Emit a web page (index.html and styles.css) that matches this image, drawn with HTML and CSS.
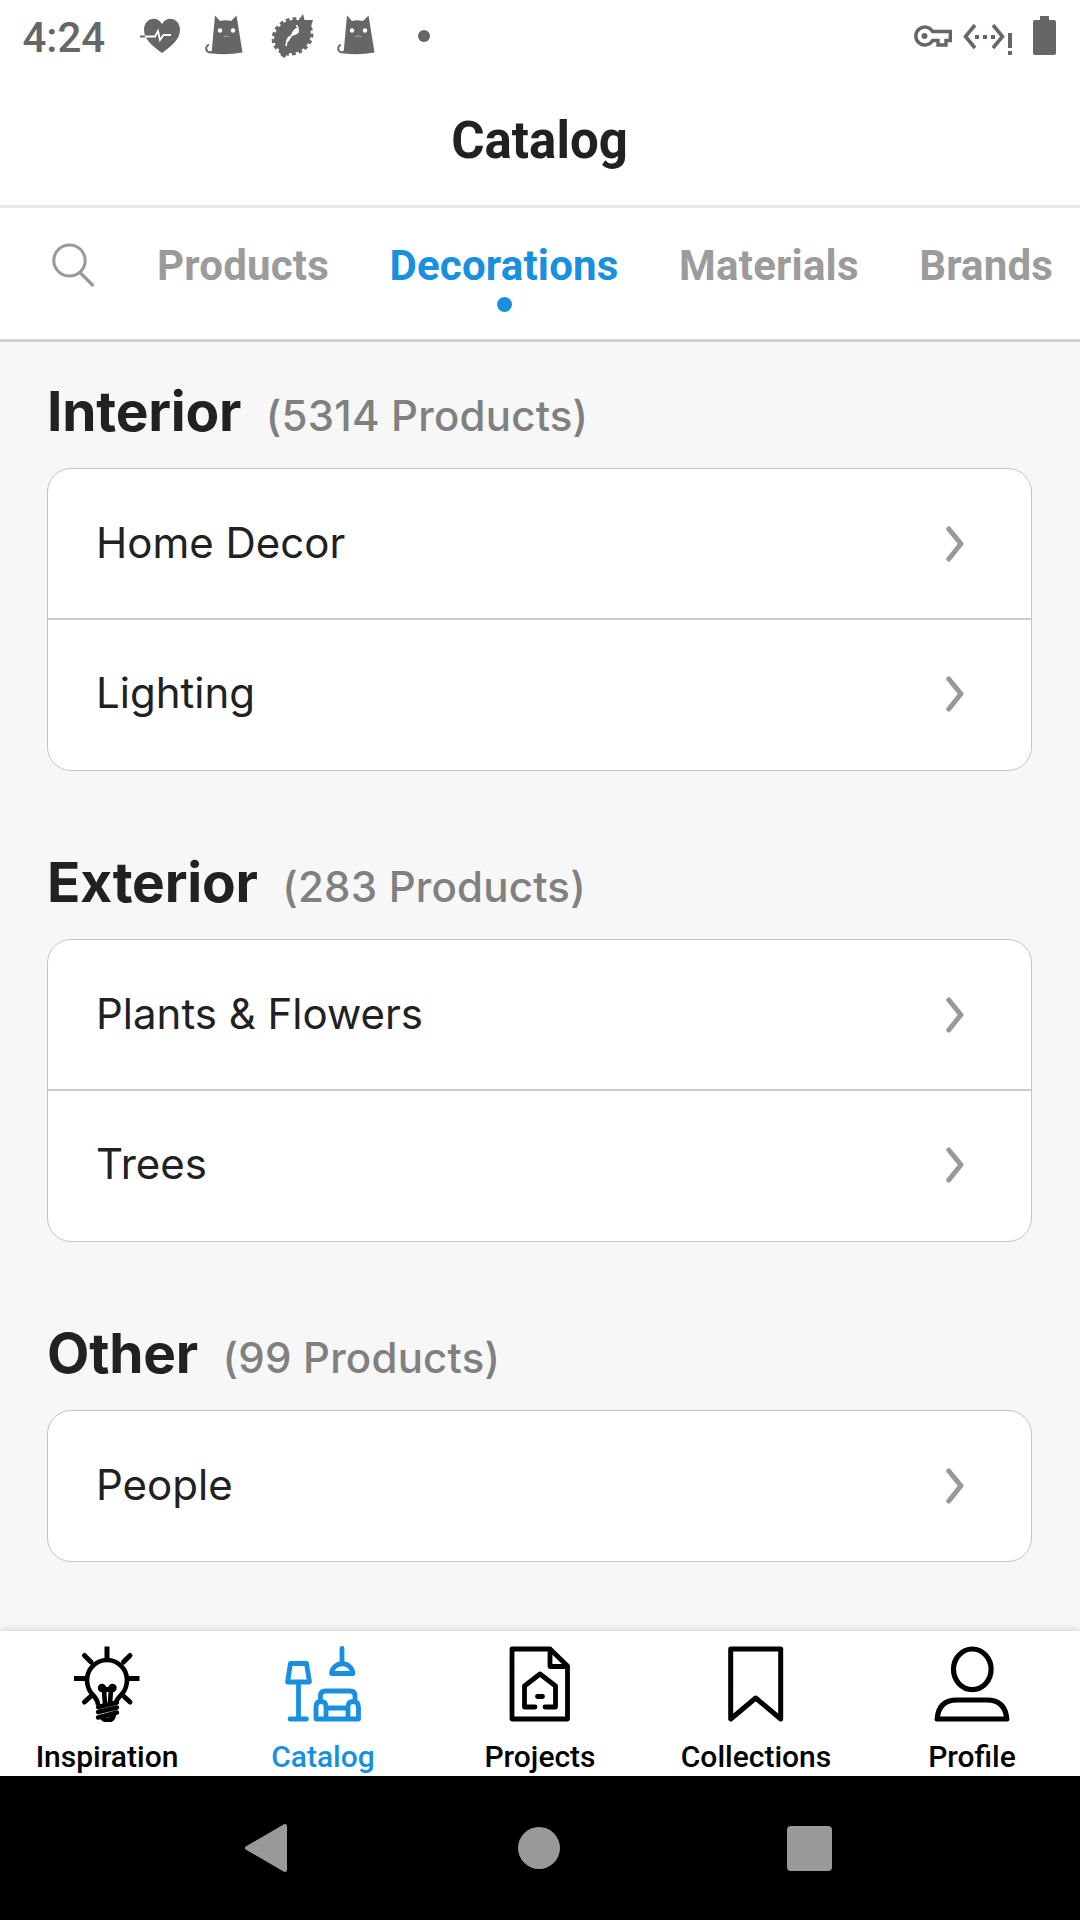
FILE: index.html
```html
<!DOCTYPE html>
<html lang="en">
<head>
<meta charset="utf-8">
<title>Catalog</title>
<link rel="stylesheet" href="styles.css">
</head>
<body>
<svg class="defs" width="0" height="0" aria-hidden="true">
  <symbol id="cat" viewBox="0 0 38 40">
    <path d="M10 0.500L15 6Q20.500 4.500 26 6L31.500 0.500L37.500 37.500Q22 40.500 6.500 38.500Z" fill="#666"/>
    <path d="M8 36.500C3 39 0.500 35.500 1.500 32Q2.200 30 4 30" fill="none" stroke="#666" stroke-width="2"/>
    <circle cx="15" cy="15.500" r="2.200" fill="#fff"/><circle cx="28" cy="15.500" r="2.200" fill="#fff"/>
    <path d="M18.500 21.800Q21.500 20 24.500 21.800" fill="none" stroke="#aaa" stroke-width="1"/>
  </symbol>
  <symbol id="chevron" viewBox="0 0 18 36">
    <path d="M2.800 3L15 17.800L2.800 33" fill="none" stroke="#999" stroke-width="5" stroke-linecap="round" stroke-linejoin="round"/>
  </symbol>
</svg>
<div class="screen">
  <div class="status">
    <span class="clock">4:24</span>
    <svg class="heart" width="40" height="36" viewBox="0 0 40 36"><path d="M22 35C14 29 4 22 4 12C4 0 17-3 22 6C27-3 40 0 40 12C40 22 30 29 22 35Z" fill="#666"/><path d="M4 18.500H15L18 13L20 22L23.500 17H31" fill="none" stroke="#fff" stroke-width="1.800"/><path d="M0 18.500H5" stroke="#666" stroke-width="2"/></svg>
    <svg class="cat" width="38" height="40"><use href="#cat"/></svg>
    <svg class="gear" width="44" height="44" viewBox="0 0 44 44"><ellipse cx="21.500" cy="22.500" rx="19" ry="16" transform="rotate(-28 21.500 22.500)" fill="#666"/><ellipse cx="21.500" cy="22.500" rx="20" ry="17" transform="rotate(-28 21.500 22.500)" fill="none" stroke="#666" stroke-width="3" stroke-dasharray="3.800 3"/><path d="M24 12L32 0L33.500 6L42 6L39 16L30 20ZM19 32L14 44L10 42L8 34L14 28Z" fill="#666"/><path d="M27 13Q29 16 27.500 19Q25 21 21 22Q19 25 18 27Q14.500 29 15 27Q16 23 20 21Q22 15 27 13Z" fill="#fff"/><path d="M27 14L25.500 11M16 27L15 32" stroke="#fff" stroke-width="1.500"/></svg>
    <svg class="cat cat-last" width="38" height="40"><use href="#cat"/></svg>
    <span class="more-dot"></span>
    <svg class="key" width="38" height="22" viewBox="0 0 38 22"><path d="M18.600 6.500A9 9 0 1 0 18.600 15.500H24V20H32V15.500H36.300V6.500Z" fill="none" stroke="#666" stroke-width="3.400"/><circle cx="10.500" cy="11" r="3" fill="#666"/></svg>
    <svg class="net" width="50" height="32" viewBox="0 0 50 32"><path d="M12 1L2.500 12.500L12 24M30 1L39.500 12.500L30 24" fill="none" stroke="#666" stroke-width="3.600"/><path d="M12 11H16V15H12ZM20 11H24V15H20ZM28 11H32V15H28ZM45 9H49V24H45ZM45 27H49V31H45Z" fill="#666"/></svg>
    <svg class="battery" width="23" height="39" viewBox="0 0 23 39"><path d="M7 0H16V4H21Q23 4 23 6V37Q23 39 21 39H2Q0 39 0 37V6Q0 4 2 4H7Z" fill="#666"/></svg>
  </div>
  <header class="header"><h1>Catalog</h1></header>
  <nav class="tabs">
    <svg class="search" width="44" height="44" viewBox="0 0 44 44"><ellipse cx="18.500" cy="17.500" rx="15.700" ry="15.500" fill="none" stroke="#999" stroke-width="3"/><path d="M29 29.500L41.500 42" stroke="#999" stroke-width="3.200" stroke-linecap="round"/></svg>
    <span class="tab t1">Products</span>
    <span class="tab t2 active">Decorations</span>
    <span class="tab t3">Materials</span>
    <span class="tab t4">Brands</span>
  </nav>
  <main class="content">
    <section>
      <h2>Interior<small>(5314 Products)</small></h2>
      <div class="card">
        <div class="row"><span>Home Decor</span><svg width="18" height="36"><use href="#chevron"/></svg></div>
        <div class="row"><span>Lighting</span><svg width="18" height="36"><use href="#chevron"/></svg></div>
      </div>
    </section>
    <section>
      <h2>Exterior<small>(283 Products)</small></h2>
      <div class="card">
        <div class="row"><span>Plants &amp; Flowers</span><svg width="18" height="36"><use href="#chevron"/></svg></div>
        <div class="row"><span>Trees</span><svg width="18" height="36"><use href="#chevron"/></svg></div>
      </div>
    </section>
    <section>
      <h2>Other<small>(99 Products)</small></h2>
      <div class="card">
        <div class="row"><span>People</span><svg width="18" height="36"><use href="#chevron"/></svg></div>
      </div>
    </section>
  </main>
  <nav class="bottom">
    <a class="near"><svg width="76" height="76" viewBox="0 0 76 76" fill="none" stroke="currentColor" stroke-width="5"><path d="M38 0.500V12M5 32.500H16.500M59 32.500H70.500"/><path d="M15.500 9.500L22 16M61 9.500L54.500 16M21 51L15.500 56M55.500 51L61 56" stroke-linecap="round"/><path d="M29 59Q29 54 23 48Q18 42 18 34A20 20 0 0 1 58 34Q58 42 53 48Q47 54 47 57" stroke-width="4.600"/><path d="M36 58L35 44M41 57L42 44" stroke-width="4.600"/><circle cx="33" cy="42" r="3.200" fill="currentColor" stroke-width="2"/><circle cx="43.500" cy="42" r="3.200" fill="currentColor" stroke-width="2"/><path d="M34 43.500H43" stroke-width="5"/><path d="M29 61L48 56.500M29 66L48 61.500M29 71.500L48 66.500" stroke-width="4.400" stroke-linecap="round"/><path d="M33 71Q35 74 38.500 74Q44.500 74 44.500 68.500" stroke-width="5"/></svg><span>Inspiration</span></a>
    <a class="near on"><svg width="76" height="76" viewBox="0 0 76 76" fill="none" stroke="currentColor" stroke-width="4.800" stroke-linecap="round" stroke-linejoin="round"><path d="M5.500 17.500H21.500L24.500 36H2.500ZM13.500 37V72M5 73H21.500M57 2.500V16M46.500 27.500A10.800 10.800 0 0 1 68 27.500Z"/><path d="M35.500 54V50Q35.500 45 40.500 45H65Q70 45 70 50V54M41 62H63M31 73V61Q31 55.500 36 55.500Q41 55.500 41 61V73M63 73V61Q63 55.500 68 55.500Q73.500 55.500 73.500 61V73ZM31 73H73"/></svg><span>Catalog</span></a>
    <a><svg width="76" height="76" viewBox="0 0 76 76" fill="none" stroke="currentColor" stroke-width="4.800" stroke-linejoin="round" stroke-linecap="round"><path d="M10 3H48L65.500 20V73H10ZM48 3V20.500H65.500"/><path d="M33 61H22.500V40L38 28L53.500 40V61H43M35.500 50.500H40.500"/></svg><span>Projects</span></a>
    <a><svg width="76" height="76" viewBox="0 0 76 76" fill="none" stroke="currentColor" stroke-width="5" stroke-linejoin="round"><path d="M12.700 3H62.700V73L37.700 52L12.700 73Z"/></svg><span>Collections</span></a>
    <a><svg width="76" height="76" viewBox="0 0 76 76" fill="none" stroke="currentColor" stroke-width="5.200" stroke-linejoin="round"><ellipse cx="38.300" cy="23.300" rx="18.800" ry="20.300"/><path d="M3.200 73Q4.500 54 23 54H53Q71 54 72.800 73Z"/></svg><span>Profile</span></a>
  </nav>
  <div class="system">
    <svg width="44" height="50" viewBox="0 0 44 50"><path d="M41 3V47L3 25Z" fill="#999" stroke="#999" stroke-width="4" stroke-linejoin="round"/></svg>
    <span class="home"></span>
    <span class="recents"></span>
  </div>
</div>
</body>
</html>
```
FILE: styles.css
```css
* { box-sizing: border-box; }
body { margin: 0; background: #fff; color: #212121; font-family: Roboto, sans-serif; }
h1, h2 { margin: 0; }
svg { display: block; flex: none; }
.defs { position: absolute; }
.screen { width: 1080px; height: 1920px; display: flex; flex-direction: column; overflow: hidden; }

.status { height: 72px; display: flex; align-items: flex-start; flex: none; }
.clock { width: 117px; padding-left: 22.500px; margin-top: 11px; font: 500 42px/54px Roboto, sans-serif; color: #666; }
.heart { margin: 18px 0 0 23px; }
.cat { margin: 15px 0 0 25px; }
.gear { margin: 14px 0 0 28px; }
.cat-last { margin-left: 22px; }
.more-dot { width: 12px; height: 12px; border-radius: 50%; background: #666; margin: 30px 0 0 43px; }
.key { margin: 25px 0 0 auto; }
.net { margin: 24px 0 0 11px; }
.battery { margin: 16px 24px 0 20px; }

.header { height: 136px; border-bottom: 3px solid #e7e7e7; display: flex; justify-content: center; align-items: center; padding: 4px 1px 0 0; flex: none; }
h1 { font-size: 51px; line-height: 60px; font-weight: 700; }

.tabs { height: 134px; border-bottom: 3px solid #d2d2d2; display: flex; padding: 0 0 0 51px; flex: none; }
.search { margin: 35px 62px 0 0; }
.tab { margin: 33px 60.500px 0 0; font-size: 42px; line-height: 50px; font-weight: 700; letter-spacing: 0.200px; color: #9b9b9b; white-space: nowrap; }
.t4 { margin-right: 0; }
.active { color: #1890df; display: flex; flex-direction: column; align-items: center; }
.active::after { content: ""; width: 15px; height: 15px; border-radius: 50%; background: #1890df; margin-top: 6px; }

.content { flex: 1; min-height: 0; overflow: hidden; background: #f7f7f7; padding: 35px 48px 0 47px; }
section { height: 471px; font-family: Inter, sans-serif; }
h2 { height: 91px; font-size: 55px; line-height: 68px; font-weight: 700; letter-spacing: -0.200px; white-space: nowrap; }
small { margin-left: 24.500px; font-size: 42px; font-weight: 500; color: #808080; letter-spacing: 0.220px; }
.card { border: 1px solid #c4c4c4; border-radius: 24px; background: #fff; overflow: hidden; }
.row { height: 149px; display: flex; align-items: center; justify-content: space-between; padding: 0 67px 0 48px; font-size: 42px; }
.row:only-child { height: 150px; }
.row span { margin-top: -3px; }
.row + .row { border-top: 2px solid #ccc; height: 152px; padding-bottom: 2px; }

.bottom { height: 145px; flex: none; display: grid; grid-template-columns: repeat(5, 216px); background: #fff; box-shadow: 0 -1px 7px rgba(0,0,0,.16); color: #000; z-index: 1; }
.bottom a { display: flex; flex-direction: column; align-items: center; padding-top: 15px; }
.bottom .near { padding-right: 2px; }
.bottom span { margin-top: 17px; font-size: 30px; line-height: 36px; font-weight: 500; white-space: nowrap; }
.on { color: #1890df; }

.system { height: 144px; flex: none; background: #000; display: flex; align-items: center; padding-left: 244px; }
.home { width: 42px; height: 42px; border-radius: 50%; background: #999; margin-left: 230px; }
.recents { width: 45px; height: 45px; border-radius: 4px; background: #999; margin-left: 227px; }
```
